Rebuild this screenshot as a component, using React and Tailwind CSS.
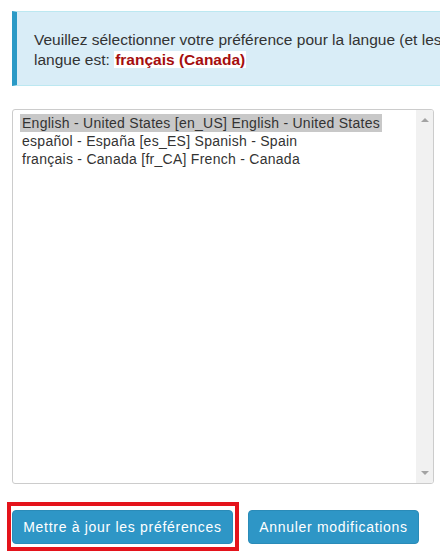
import React from 'react';

const options = [
  'English - United States [en_US] English - United States',
  'español - España [es_ES] Spanish - Spain',
  'français - Canada [fr_CA] French - Canada',
];

const App = () => {
  return (
    <div
      className="relative w-[440px] h-[559px] overflow-hidden bg-white pl-[12px] pt-[11px]"
      style={{ fontFamily: '"Liberation Sans", Arial, sans-serif' }}
    >
      {/* Info alert */}
      <div className="w-[640px] bg-[#d9edf7] border-t border-b border-[#bce8f1] border-l-[5px] border-l-[#2b9ac6] pl-[17px] pt-[18px] pb-[15px] text-[15.5px] leading-[20px] text-[#333333] whitespace-nowrap">
        Veuillez sélectionner votre préférence pour la langue (et les paramètres régionaux). Votre
        <br />
        langue est:{' '}
        <span className="bg-white font-bold text-[#a50e0e] px-[1px]">français (Canada)</span>
      </div>

      {/* Language list */}
      <div className="mt-[23px] w-[422px] h-[375px] flex border border-[#cccccc] rounded-[3px] bg-white overflow-hidden">
        <div className="flex-1 pt-[4px] pl-[7px] text-[14px] leading-[18px] tracking-[0.27px] text-[#333333]">
          {options.map((o, i) => (
            <div key={o} className="flex">
              <span className={i === 0 ? 'bg-[#c8c8c8] px-[2px]' : 'px-[2px]'}>{o}</span>
            </div>
          ))}
        </div>
        <div className="w-[17px] bg-[#f1f1f1] flex flex-col justify-between items-center py-[8px]">
          <div className="w-0 h-0 border-l-[4px] border-r-[4px] border-b-[4px] border-l-transparent border-r-transparent border-b-[#a3a3a3]" />
          <div className="w-0 h-0 border-l-[4px] border-r-[4px] border-t-[4px] border-l-transparent border-r-transparent border-t-[#a3a3a3]" />
        </div>
      </div>

      {/* Actions */}
      <div className="mt-[26px] flex gap-[15px]">
        <button className="w-[221px] h-[34px] rounded-[4px] bg-[#2e96c6] text-white text-[14px] tracking-[0.7px] border border-[#2a8bb8]">
          Mettre à jour les préférences
        </button>
        <button className="w-[171px] h-[34px] rounded-[4px] bg-[#2e96c6] text-white text-[14px] tracking-[0.7px] border border-[#2a8bb8]">
          Annuler modifications
        </button>
      </div>

      {/* Highlight annotation */}
      <div className="absolute left-[7px] top-[502px] w-[232px] h-[49px] border-[4px] border-[#e4131b] pointer-events-none" />
    </div>
  );
};

export default App;
